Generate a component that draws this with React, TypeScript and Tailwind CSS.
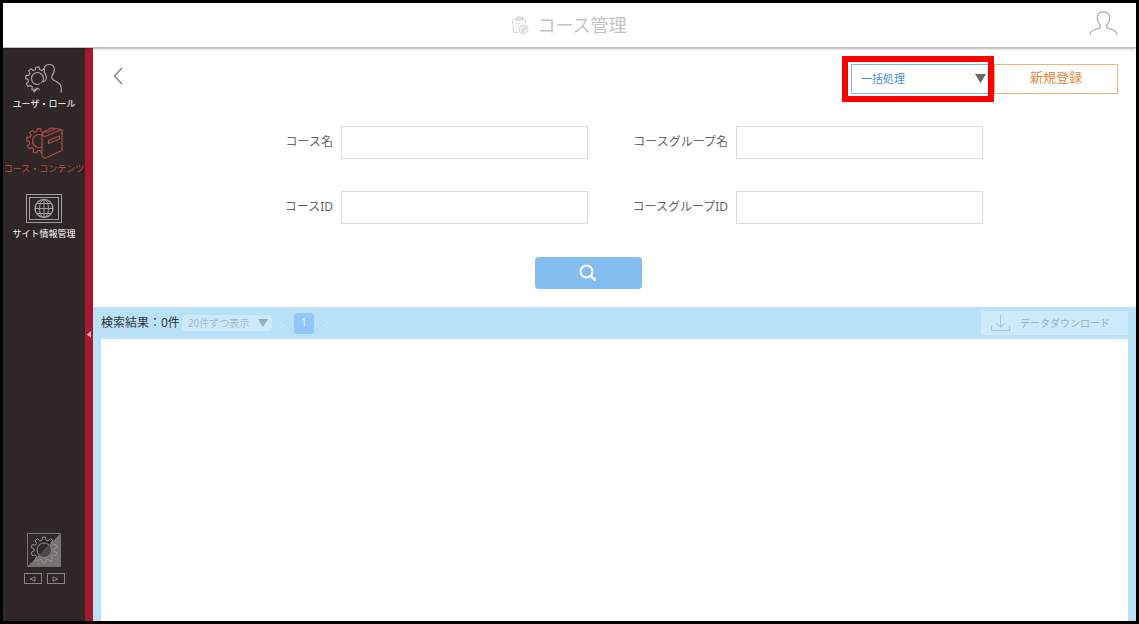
import type { ReactNode } from "react";

// Outline of a cog wheel centred on (cx, cy)
const gearPath = (cx: number, cy: number, outer: number, inner: number, teeth: number) => {
  const step = (Math.PI * 2) / teeth;
  const points: string[] = [];
  for (let i = 0; i < teeth; i++) {
    const a = i * step - Math.PI / 2;
    const corners: [number, number][] = [
      [inner, -0.32],
      [outer, -0.2],
      [outer, 0.2],
      [inner, 0.32],
    ];
    corners.forEach(([r, t]) => {
      points.push(`${(cx + r * Math.cos(a + t * step)).toFixed(2)} ${(cy + r * Math.sin(a + t * step)).toFixed(2)}`);
    });
  }
  return `M${points.join("L")}Z`;
};

const UserRoleIcon = () => (
  <svg width="38" height="30" viewBox="0 0 38 30" fill="none" stroke="#a5a09f" strokeWidth="1.2" strokeLinejoin="round" aria-hidden="true">
    <path d={gearPath(12.5, 16, 12, 9.5, 9)} />
    <circle cx="12.5" cy="15.500" r="6" />
    <path
      d="M15 31L14 22C16 19 20 18.500 21 16 21.500 15 21.300 13.500 21 12.500 19.500 10.500 19 8 19.300 5.500 19.600 2.500 21.500 1.500 24.300 1.500S29 3 29.300 6c.2 3-.8 5-2.300 6.500-.7 2 0 3.500 1.500 4.500 3 1.500 6 3 7 5 .7 1.500.8 4 .8 9Z"
      fill="#2f2725"
      stroke="none"
    />
    <path d="M18 19C20 18.200 21 17.500 21.300 16 21.500 15 21.300 13.500 21 12.500 19.500 10.500 19 8 19.300 5.500 19.600 2.500 21.500 1.500 24.300 1.500S29 3 29.300 6c.2 3-.8 5-2.300 6.500-.7 2 0 3.500 1.500 4.500 3 1.500 6 3 7 5 .7 1.500.8 4 .8 7.500" />
    <path d="M9 25.500V29L12.500 25.500" />
  </svg>
);

const CourseIcon = () => (
  <svg width="38" height="34" viewBox="0 0 38 34" fill="none" stroke="#b04a4d" strokeWidth="1.2" strokeLinejoin="round" aria-hidden="true">
    <path d={gearPath(14, 15, 12.5, 9.8, 9)} />
    <circle cx="14" cy="15" r="6.500" />
    <path d="M17 8Q18 6.500 26 2L37 3.500V24.500L19.500 32.500Q17 31 17 29Z" fill="#2f2725" />
    <path d="M17 8Q18 11 21 10L37 3.500M21 7L30.500 2.800M23.500 14.500L34.500 10V13L23.500 17.500Z" />
  </svg>
);

const SiteIcon = () => (
  <svg width="36" height="29" viewBox="0 0 36 29" fill="none" stroke="#a5a09f" aria-hidden="true">
    <rect x="0.500" y="0.500" width="35" height="28" />
    <rect x="3.500" y="3.500" width="29" height="22" />
    <circle cx="18" cy="14.500" r="9" strokeWidth="1.400" />
    <ellipse cx="18" cy="14.500" rx="4.500" ry="9" />
    <path d="M18 5.500V23.500M9 14.500H27M11 9.500H25M11 19.500H25" />
  </svg>
);

const SettingsIcon = () => (
  <svg width="34" height="34" viewBox="0 0 34 34" fill="none" aria-hidden="true">
    <path d="M33.500 0.500V33.500H0.500Z" fill="#777273" />
    <rect x="0.500" y="0.500" width="33" height="33" stroke="#777273" />
    <path d={gearPath(17, 17, 13, 10, 10)} stroke="#969192" strokeLinejoin="round" />
    <circle cx="17" cy="17" r="7" stroke="#969192" />
    <path d="M22 12A7 7 0 0 1 12 22Z" fill="#4f4a4a" />
  </svg>
);

const TitleIcon = () => (
  <svg width="17" height="19" viewBox="0 0 17 19" fill="none" stroke="#d6d6d6" aria-hidden="true">
    <path d="M6 16.500H1.500L.5 4 3 2.500M11 2l2 1 .5 5" />
    <path d="M3 2.500L6 .8 10.500 1 11.500 3.500 4 5Z" fill="#dedede" />
    <path d="M3 7.500h7M3 10h4" stroke="#e8e8e8" />
    <circle cx="11.500" cy="13.500" r="4.500" fill="#ececec" />
    <path d="M10 15.500l.5-2 3-2.500 1 1-3 3Z" />
  </svg>
);

const UserIcon = () => (
  <svg width="29" height="25" viewBox="0 0 29 25" fill="none" stroke="#adadad" strokeWidth="1.2" aria-hidden="true">
    <path d="M1 24c0-3 1.500-4 4-5 3-1 6-1.500 6.500-3 .3-1.500-.5-2.500-1.500-3.500C8.500 10.500 8 8 8.300 5.500 8.700 2.500 11 .8 14.500 .8s5.800 1.700 6.200 4.700c.3 2.500-.2 5-1.700 7-1 1-1.800 2-1.500 3.500.5 1.500 3.500 2 6.500 3 2.500 1 4 2 4 5" />
  </svg>
);

const BackIcon = () => (
  <svg width="10" height="18" viewBox="0 0 10 18" fill="none" stroke="currentColor" strokeWidth="1.600" aria-hidden="true">
    <path d="M9 1L1.500 9 9 17" />
  </svg>
);

const SearchIcon = () => (
  <svg width="18" height="18" viewBox="0 0 18 18" fill="none" stroke="currentColor" strokeWidth="2" aria-hidden="true">
    <circle cx="7.500" cy="7.500" r="6" />
    <path d="M11.800 11.800L16.500 16.500" strokeWidth="2.400" />
  </svg>
);

const DownloadIcon = () => (
  <svg width="19" height="18" viewBox="0 0 19 18" fill="none" stroke="#a3c6da" aria-hidden="true">
    <path d="M9.500 1V13.500M5 9L9.500 13.500 14 9M.5 12V16.500H18.500V12" />
  </svg>
);

const Triangle = ({ className }: { className: string }) => (
  <svg viewBox="0 0 10 8" className={className} fill="currentColor" aria-hidden="true">
    <path d="M0 0H10L5 8Z" />
  </svg>
);

const NavItem = ({ label, active, children }: { label: string; active?: boolean; children: ReactNode }) => (
  <a
    href="#"
    className={`flex h-[65px] flex-col items-center gap-[2px] whitespace-nowrap text-[9px] leading-3 ${active ? "text-[#c04a4c]" : "text-white"}`}
  >
    <span className="flex h-9 items-center">{children}</span>
    {label}
  </a>
);

const Field = ({ id, label }: { id: string; label: string }) => (
  <div className="flex items-center justify-end gap-2">
    <label htmlFor={id} className="pb-[2px] text-xs text-[#666]">
      {label}
    </label>
    <input id={id} type="text" className="h-[33px] w-[247px] border border-[#dcdcdc] bg-white px-2 text-xs" />
  </div>
);

const Sidebar = () => (
  <div className="flex shrink-0">
    <nav className="flex w-[82px] flex-col bg-[#2f2725] pt-3">
      <NavItem label="ユーザ・ロール">
        <UserRoleIcon />
      </NavItem>
      <NavItem label="コース・コンテンツ" active>
        <CourseIcon />
      </NavItem>
      <NavItem label="サイト情報管理">
        <SiteIcon />
      </NavItem>
      <div className="mt-auto flex flex-col items-center gap-[6px] pb-[37px]">
        <button type="button" aria-label="設定">
          <SettingsIcon />
        </button>
        <div className="flex gap-[5px]">
          <button type="button" aria-label="前へ" className="flex h-[11px] w-[18px] items-center justify-center border border-[#8a8585] text-[#8a8585]">
            <svg width="7" height="6" viewBox="0 0 7 6" fill="none" stroke="currentColor">
              <path d="M6 .8V5.200L1 3Z" />
            </svg>
          </button>
          <button type="button" aria-label="次へ" className="flex h-[11px] w-[18px] items-center justify-center border border-[#8a8585] text-[#8a8585]">
            <svg width="7" height="6" viewBox="0 0 7 6" fill="none" stroke="currentColor">
              <path d="M1 .8V5.200L6 3Z" />
            </svg>
          </button>
        </div>
      </div>
    </nav>
    <button type="button" aria-label="メニューを閉じる" className="flex w-2 items-center justify-center bg-[#a5182e]">
      <svg width="4" height="7" viewBox="0 0 4 7" fill="#e3b5bb">
        <path d="M4 0V7L0 3.500Z" />
      </svg>
    </button>
  </div>
);

const App = () => {
  return (
    <div className="flex min-h-screen flex-col border-[3px] border-black bg-white font-['Noto_Sans','Noto_Sans_CJK_JP',sans-serif]">
      <header className="relative z-10 grid h-[45px] grid-cols-[1fr_auto_1fr] items-center border-b border-[#bdbdbd] bg-white px-[18px] shadow-[0_1px_2px_rgba(0,0,0,0.3)]">
        <h1 className="col-start-2 flex items-center gap-2 text-lg text-[#c4c4c4]">
          <TitleIcon />
          コース管理
        </h1>
        <button type="button" aria-label="ユーザ" className="justify-self-end pb-1">
          <UserIcon />
        </button>
      </header>

      <div className="flex flex-1">
        <Sidebar />

        <main className="flex min-w-0 flex-1 flex-col">
          {/* ツールバー */}
          <div className="flex justify-between pt-4 pr-[18px] pl-5">
            <button type="button" aria-label="戻る" className="h-6 text-[#8c8c8c]">
              <BackIcon />
            </button>
            <div className="flex">
              <div className="relative">
                <select
                  aria-label="一括処理"
                  className="h-[30px] w-[143px] appearance-none border border-[#7db4e2] bg-white pl-[9px] text-[11px] text-[#4a90d0]"
                >
                  <option>一括処理</option>
                </select>
                <Triangle className="pointer-events-none absolute top-[10px] right-2 h-[9px] w-[11px] text-[#666]" />
                <div className="pointer-events-none absolute -top-2 right-0 -bottom-2 -left-[9px] border-[6px] border-[#fe0000]"></div>
              </div>
              <button type="button" className="h-[30px] w-[124px] border border-[#f3b173] pb-[2px] text-[13px] text-[#e8893a]">
                新規登録
              </button>
            </div>
          </div>

          {/* 検索条件 */}
          <form className="pt-8 pr-[53px] pb-[18px]">
            <div className="mx-auto grid max-w-[790px] grid-cols-2 gap-y-8">
              <Field id="course-name" label="コース名" />
              <Field id="group-name" label="コースグループ名" />
              <Field id="course-id" label="コースID" />
              <Field id="group-id" label="コースグループID" />
            </div>
            <button
              type="button"
              aria-label="検索"
              className="mx-auto mt-[33px] flex h-8 w-[107px] items-center justify-center rounded bg-[#83bdf0] text-white"
            >
              <SearchIcon />
            </button>
          </form>

          {/* 検索結果 */}
          <section className="flex flex-1 flex-col bg-[#b9e2f8] px-2">
            <div className="flex h-8 items-center">
              <p className="text-xs text-[#333]">検索結果：0件</p>
              <div className="relative ml-[2px]">
                <select
                  disabled
                  aria-label="表示件数"
                  className="block h-4 w-[90px] appearance-none rounded-sm bg-[#cdeafb] pl-[6px] text-[10px] leading-4 text-[#9fbccd] opacity-100"
                >
                  <option>20件ずつ表示</option>
                </select>
                <Triangle className="pointer-events-none absolute top-1 right-1 h-2 w-[10px] text-[#8bb0c4]" />
              </div>
              <div className="ml-[11px] flex items-center gap-[5px] text-[#afdaf2]">
                <svg width="6" height="8" viewBox="0 0 6 8" fill="none" stroke="currentColor">
                  <path d="M5.500 .8V7.200L.8 4Z" />
                </svg>
                <button type="button" className="h-[21px] w-5 rounded bg-[#95c6fa] text-xs leading-5 text-[#d3eafe]">
                  1
                </button>
                <svg width="6" height="8" viewBox="0 0 6 8" fill="none" stroke="currentColor">
                  <path d="M.5 .8V7.200L5.200 4Z" />
                </svg>
              </div>
              <button
                type="button"
                disabled
                className="ml-auto flex h-6 w-[147px] items-center gap-[10px] bg-[#cdeafc] pl-[10px] text-[10px] text-[#8fb2c6]"
              >
                <DownloadIcon />
                データダウンロード
              </button>
            </div>
            <div className="flex-1 bg-white"></div>
          </section>
        </main>
      </div>
    </div>
  );
};

export default App;
